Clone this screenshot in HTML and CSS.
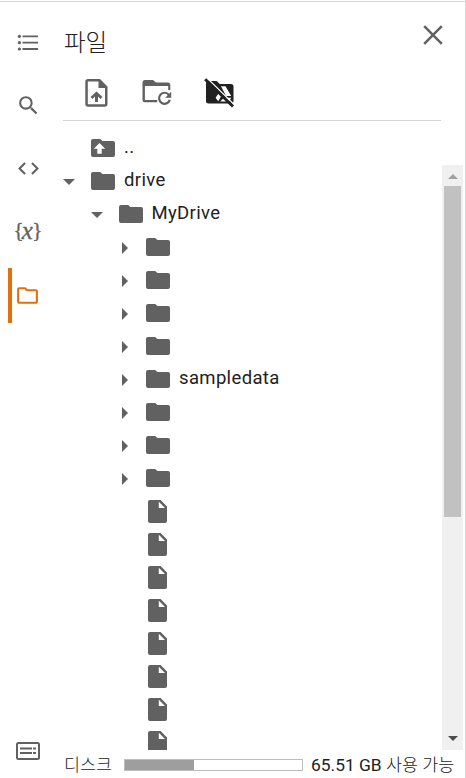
FILE: index.html
```html
<!DOCTYPE html>
<html lang="ko">
<head>
    <meta charset="UTF-8">
    <meta name="viewport" content="width=device-width, initial-scale=1.0">
    <title>파일</title>
    <link rel="stylesheet" href="styles.css">
</head>
<body>
    <svg class="defs" width="0" height="0">
        <symbol id="folder" viewBox="0 0 24 18">
            <path d="M2 0h7.2l2.2 2H22a2 2 0 0 1 2 2v12a2 2 0 0 1-2 2H2a2 2 0 0 1-2-2V2a2 2 0 0 1 2-2z"/>
        </symbol>
        <symbol id="file" viewBox="0 0 19 23">
            <path fill-rule="evenodd" d="M2 0h10.6L19 6.5V21a2 2 0 0 1-2 2H2a2 2 0 0 1-2-2V2a2 2 0 0 1 2-2zM10.800 1.800V8H17z"/>
        </symbol>
    </svg>

    <div class="app">
        <nav class="rail">
            <button class="rail-item">
                <svg width="24" height="24" viewBox="0 0 24 24">
                    <path d="M6.500 4.400h15.500v1.900H6.500zM6.500 10.700h15.500v1.900H6.500zM6.500 17h15.500v1.900H6.500z"/>
                    <circle cx="3.400" cy="5.300" r="1.600"/><circle cx="3.400" cy="11.700" r="1.600"/><circle cx="3.400" cy="18" r="1.600"/>
                </svg>
            </button>
            <button class="rail-item">
                <svg width="25" height="25" viewBox="0 0 24 24">
                    <path d="M15.500 14h-.79l-.28-.27A6.471 6.471 0 0 0 16 9.500 6.500 6.500 0 1 0 9.500 16c1.610 0 3.090-.59 4.230-1.570l.27.28v.79l5 4.990L20.490 19l-4.990-5zm-6 0C7.010 14 5 11.990 5 9.500S7.010 5 9.500 5 14 7.010 14 9.500 11.990 14 9.500 14z"/>
                </svg>
            </button>
            <button class="rail-item">
                <svg width="25" height="25" viewBox="0 0 24 24">
                    <path d="M9.400 16.600L4.800 12l4.600-4.600L8 6l-6 6 6 6 1.400-1.400zm5.200 0l4.600-4.600-4.600-4.600L16 6l6 6-6 6-1.400-1.400z"/>
                </svg>
            </button>
            <button class="rail-item variables">{<i>x</i>}</button>
            <button class="rail-item active">
                <svg width="25" height="25" viewBox="0 0 24 24">
                    <path d="M9.170 6l2 2H20v10H4V6h5.170M10 4H4c-1.100 0-1.990.9-1.990 2L2 18c0 1.100.9 2 2 2h16c1.100 0 2-.9 2-2V8c0-1.100-.9-2-2-2h-8l-2-2z"/>
                </svg>
            </button>
            <button class="rail-item terminal">
                <svg width="24" height="18" viewBox="0 0 24 18">
                    <rect x="1" y="1" width="22" height="16" rx="1.500" fill="none" stroke="currentColor" stroke-width="2"/>
                    <path d="M4 5.500h12v2H4zM17 5.500h3v2h-3zM4 10h12v2H4zM17 10h3v2h-3z"/>
                </svg>
            </button>
        </nav>

        <main class="panel">
            <header class="panel-header">
                <h1>파일</h1>
                <button class="close">
                    <svg width="20" height="20" viewBox="0 0 20 20">
                        <path d="M1.200 1.200l17.600 17.600M18.800 1.200L1.200 18.800" stroke="currentColor" stroke-width="2.500"/>
                    </svg>
                </button>
            </header>

            <div class="toolbar">
                <button>
                    <svg width="23" height="28" viewBox="0 0 23 28">
                        <path fill-rule="evenodd" d="M3 0h12l7.500 7.500V25a2.700 2.700 0 0 1-2.700 2.700H3A2.700 2.700 0 0 1 .3 25V2.700A2.700 2.700 0 0 1 3 0zM2.800 2.500v22.700H20V9h-6.500V2.500z"/>
                        <path d="M10 23v-5.500l-2.600 2.400-1.900-1.900 6-5.500 6 5.500-1.900 1.900-2.600-2.400V23z"/>
                    </svg>
                </button>
                <button>
                    <svg width="31" height="28" viewBox="0 0 31 28">
                        <path fill-rule="evenodd" d="M2.700 1h8.300l3 2.500h11.800A2.500 2.500 0 0 1 28.300 6v5h-2.100V7H2.900v14h12.300v2.300H3A2.500 2.500 0 0 1 .5 20.800V3.500A2.500 2.500 0 0 1 2.700 1z"/>
                        <path d="M27.200 16.300a5.500 5.500 0 1 0 .6 4.600" fill="none" stroke="currentColor" stroke-width="2.200"/>
                        <path d="M29.200 12.800v6h-6z"/>
                    </svg>
                </button>
                <button class="drive-off">
                    <svg width="32" height="30" viewBox="0 0 32 30">
                        <path d="M4.500 3h8.200l3 3H27a2.500 2.500 0 0 1 2.500 2.500V23a2.500 2.500 0 0 1-2.500 2.500H4.500A2.500 2.500 0 0 1 2 23V5.500A2.500 2.500 0 0 1 4.500 3z"/>
                        <path class="drive-logo" d="M17 8.300h4.500l5.700 9.700H22zM15.200 14.500l3 2-4 6.800-2.600-3.600zM20 19.700h7.200l-2 3.800h-9z"/>
                        <path d="M3 0l28.600 28" stroke="#fff" stroke-width="1.300"/>
                        <path d="M1.200 1.200L29 28.500" stroke="currentColor" stroke-width="3"/>
                    </svg>
                </button>
            </div>

            <div class="row parent">
                <span class="arrow"></span>
                <svg class="folder"><use href="#folder"/><path class="up" d="M8.500 4l5.700 5.800h-3.500v5H6.300v-5H2.800z"/></svg>
                <span class="name">..</span>
            </div>

            <div class="scroll-area">
                <div class="tree">
                    <div class="row"><span class="arrow open"></span><svg class="folder"><use href="#folder"/></svg><span class="name">drive</span></div>
                    <div class="row level-1"><span class="arrow open"></span><svg class="folder"><use href="#folder"/></svg><span class="name">MyDrive</span></div>
                    <div class="row level-2"><span class="arrow closed"></span><svg class="folder"><use href="#folder"/></svg></div>
                    <div class="row level-2"><span class="arrow closed"></span><svg class="folder"><use href="#folder"/></svg></div>
                    <div class="row level-2"><span class="arrow closed"></span><svg class="folder"><use href="#folder"/></svg></div>
                    <div class="row level-2"><span class="arrow closed"></span><svg class="folder"><use href="#folder"/></svg></div>
                    <div class="row level-2"><span class="arrow closed"></span><svg class="folder"><use href="#folder"/></svg><span class="name">sampledata</span></div>
                    <div class="row level-2"><span class="arrow closed"></span><svg class="folder"><use href="#folder"/></svg></div>
                    <div class="row level-2"><span class="arrow closed"></span><svg class="folder"><use href="#folder"/></svg></div>
                    <div class="row level-2"><span class="arrow closed"></span><svg class="folder"><use href="#folder"/></svg></div>
                    <div class="row level-2"><span class="arrow"></span><svg class="file"><use href="#file"/></svg></div>
                    <div class="row level-2"><span class="arrow"></span><svg class="file"><use href="#file"/></svg></div>
                    <div class="row level-2"><span class="arrow"></span><svg class="file"><use href="#file"/></svg></div>
                    <div class="row level-2"><span class="arrow"></span><svg class="file"><use href="#file"/></svg></div>
                    <div class="row level-2"><span class="arrow"></span><svg class="file"><use href="#file"/></svg></div>
                    <div class="row level-2"><span class="arrow"></span><svg class="file"><use href="#file"/></svg></div>
                    <div class="row level-2"><span class="arrow"></span><svg class="file"><use href="#file"/></svg></div>
                    <div class="row level-2"><span class="arrow"></span><svg class="file"><use href="#file"/></svg></div>
                </div>
                <div class="scrollbar">
                    <span class="scroll-up"></span>
                    <div class="thumb"></div>
                    <span class="scroll-down"></span>
                </div>
            </div>

            <footer class="disk">
                <span class="disk-label">디스크</span>
                <div class="disk-bar"><div class="disk-used" style="width: 39%"></div></div>
                <span class="disk-free"><b>65.51 GB</b> 사용 가능</span>
            </footer>
        </main>
    </div>
</body>
</html>
```
FILE: styles.css
```css
* {
    box-sizing: border-box;
}

body {
    margin: 0;
    background: #fff;
    color: #212121;
    font-family: Roboto, "Noto Sans CJK KR", sans-serif;
    font-size: 18.5px;
}

button {
    padding: 0;
    border: none;
    background: none;
    color: #616161;
    cursor: pointer;
}

svg {
    display: block;
    flex: none;
    fill: currentColor;
}

.defs {
    position: absolute;
}

.app {
    display: flex;
    height: 778px;
    padding-top: 1px;
    overflow: hidden;
    border-right: 1px solid #d6d6d6;
    background: linear-gradient(#d6d6d6, #d6d6d6) 0 1px / 100% 1px no-repeat;
}

/* left rail */
.rail {
    display: flex;
    flex-direction: column;
    gap: 8px;
    width: 56px;
    padding: 14px 0 0 8px;
}

.rail-item {
    display: flex;
    flex: none;
    align-items: center;
    justify-content: center;
    width: 48px;
    height: 55px;
    padding-right: 8px;
}

.variables {
    padding-right: 10px;
    padding-bottom: 2px;
    font-family: "Liberation Serif", serif;
    font-size: 21px;
    letter-spacing: -1.7px;
    -webkit-text-stroke: 0.3px #616161;
}

.variables i {
    margin-right: 1px;
    font-size: 25px;
}

.rail-item.active {
    margin-top: 1px;
    padding-right: 13px;
    border-left: 4px solid #e0710d;
    color: #e0710d;
}

.terminal {
    margin-top: auto;
}

/* file panel */
.panel {
    display: flex;
    flex: 1;
    flex-direction: column;
    min-width: 0;
    padding-left: 7px;
}

.panel-header {
    display: flex;
    justify-content: space-between;
    height: 66px;
    padding: 24px 22px 0 1px;
}

h1 {
    margin: 0;
    font-size: 23.5px;
    font-weight: 300;
    line-height: 36px;
}

.close {
    height: 20px;
}

.toolbar {
    display: flex;
    gap: 34px;
    height: 54px;
    margin-right: 24px;
    padding: 11px 0 0 22px;
    border-bottom: 1px solid #d6d6d6;
}

.toolbar button {
    height: 30px;
}

.toolbar .drive-off {
    margin-left: -3px;
    color: #212121;
}

.drive-logo {
    fill: #fff;
}

.row {
    display: flex;
    flex: none;
    align-items: center;
    height: 33px;
}

.parent {
    margin-top: 11px;
}

.level-1 {
    padding-left: 27.5px;
}

.level-2 {
    padding-left: 55px;
}

.arrow {
    display: flex;
    flex: none;
    justify-content: center;
    width: 12px;
    margin-right: 16px;
}

.open::before {
    content: "";
    border: 6px solid transparent;
    border-top-color: #616161;
    border-bottom: none;
}

.closed::before {
    content: "";
    margin-left: 1px;
    border: 6px solid transparent;
    border-left-color: #616161;
    border-right: none;
}

.folder {
    width: 24px;
    height: 18px;
    margin-right: 9px;
    margin-bottom: 1px;
    color: #616161;
}

.up {
    fill: #fff;
}

.file {
    width: 19px;
    height: 23px;
    margin-left: 2px;
    color: #616161;
}

.name {
    padding-bottom: 3px;
    letter-spacing: 0.35px;
}

.scroll-area {
    display: flex;
    height: 585px;
    overflow: hidden;
}

.tree {
    flex: 1;
    height: 585px;
    overflow: hidden;
}

.scrollbar {
    display: flex;
    flex-direction: column;
    width: 21px;
    margin-right: 2px;
    padding: 0 2px;
    background: #f0f0f0;
}

.thumb {
    height: 331px;
    background: #c1c1c1;
}

.scroll-up,
.scroll-down {
    display: flex;
    align-items: center;
    justify-content: center;
    height: 21px;
}

.scroll-up {
    padding-top: 2px;
}

.scroll-down {
    margin-top: auto;
    padding-bottom: 2px;
}

.scroll-up::before {
    content: "";
    border: 5px solid transparent;
    border-bottom-color: #a0a0a0;
    border-top: none;
}

.scroll-down::before {
    content: "";
    border: 5px solid transparent;
    border-top-color: #4d4d4d;
    border-bottom: none;
}

.disk {
    display: flex;
    align-items: center;
    height: 28px;
    padding: 1px 0 0 1px;
    font-size: 17.4px;
    font-weight: 300;
    white-space: nowrap;
}

.disk-label,
.disk-free {
    padding-bottom: 2px;
}

.disk-free b {
    font-weight: 400;
}

.disk-label {
    width: 60px;
}

.disk-bar {
    width: 179px;
    height: 12px;
    margin-right: 8px;
    border: 1px solid #bdbdbd;
}

.disk-used {
    height: 100%;
    background: #9e9e9e;
}
```
